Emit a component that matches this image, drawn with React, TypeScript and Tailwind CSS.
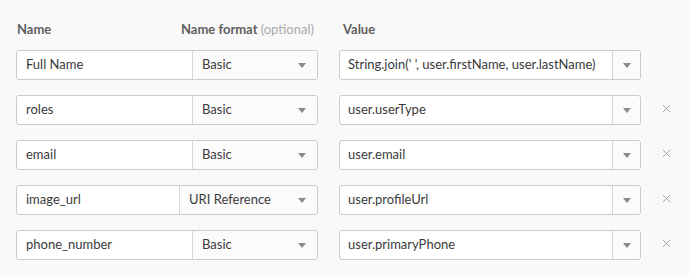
import { X } from "lucide-react";

type Row = { name: string; format: string; formatW: string; value: string; removable: boolean };

const rows: Row[] = [
  { name: "Full Name", format: "Basic", formatW: "w-[125px]", value: "String.join(' ', user.firstName, user.lastName)", removable: false },
  { name: "roles", format: "Basic", formatW: "w-[125px]", value: "user.userType", removable: true },
  { name: "email", format: "Basic", formatW: "w-[125px]", value: "user.email", removable: true },
  { name: "image_url", format: "URI Reference", formatW: "w-[138px]", value: "user.profileUrl", removable: true },
  { name: "phone_number", format: "Basic", formatW: "w-[125px]", value: "user.primaryPhone", removable: true },
];

function Caret() {
  return (
    <svg width="8" height="5" viewBox="0 0 8 5" className="shrink-0">
      <path d="M0 0h8L4 5z" fill="#8a8a8a" />
    </svg>
  );
}

export default function App() {
  return (
    <div
      className="w-[689px] h-[277px] bg-[#f9f9f9] pl-4 pt-[23px] text-[#3a3a3a]"
      style={{ fontFamily: "Lato, 'Liberation Sans', sans-serif" }}
    >
      {/* header */}
      <div className="flex items-center h-[14px] text-[13px] font-bold text-[#5f5f5f]">
        <div className="w-[165px] pl-px">Name</div>
        <div className="w-[162px]">
          Name format <span className="font-normal text-[#aaa]">(optional)</span>
        </div>
        <div>Value</div>
      </div>

      <div className="mt-[13px] flex flex-col gap-[15px]">
        {rows.map((r) => (
          <div key={r.name} className="flex items-center">
            <div className="flex w-[302px] h-[30px] border border-[#cbcbcb] rounded-[3px] bg-white text-[13px]">
              <div className="flex-1 flex items-center px-[9px] truncate">{r.name}</div>
              <div
                className={`${r.formatW} flex items-center justify-between pl-[9px] pr-[11px] border-l border-[#d6d6d6] bg-[#fbfbfb] rounded-r-[3px]`}
              >
                <span>{r.format}</span>
                <Caret />
              </div>
            </div>

            <div className="ml-[21px] flex w-[302px] h-[30px] border border-[#cbcbcb] rounded-[3px] bg-white text-[13px]">
              <div className="flex-1 flex items-center px-[8px] whitespace-nowrap overflow-hidden">{r.value}</div>
              <div className="w-[28px] flex items-center justify-center border-l border-[#d6d6d6] bg-[#fbfbfb] rounded-r-[3px]">
                <Caret />
              </div>
            </div>

            {r.removable && (
              <div className="ml-[19px] -mt-[4px] text-[#999]">
                <X size={13} strokeWidth={1.6} />
              </div>
            )}
          </div>
        ))}
      </div>
    </div>
  );
}
